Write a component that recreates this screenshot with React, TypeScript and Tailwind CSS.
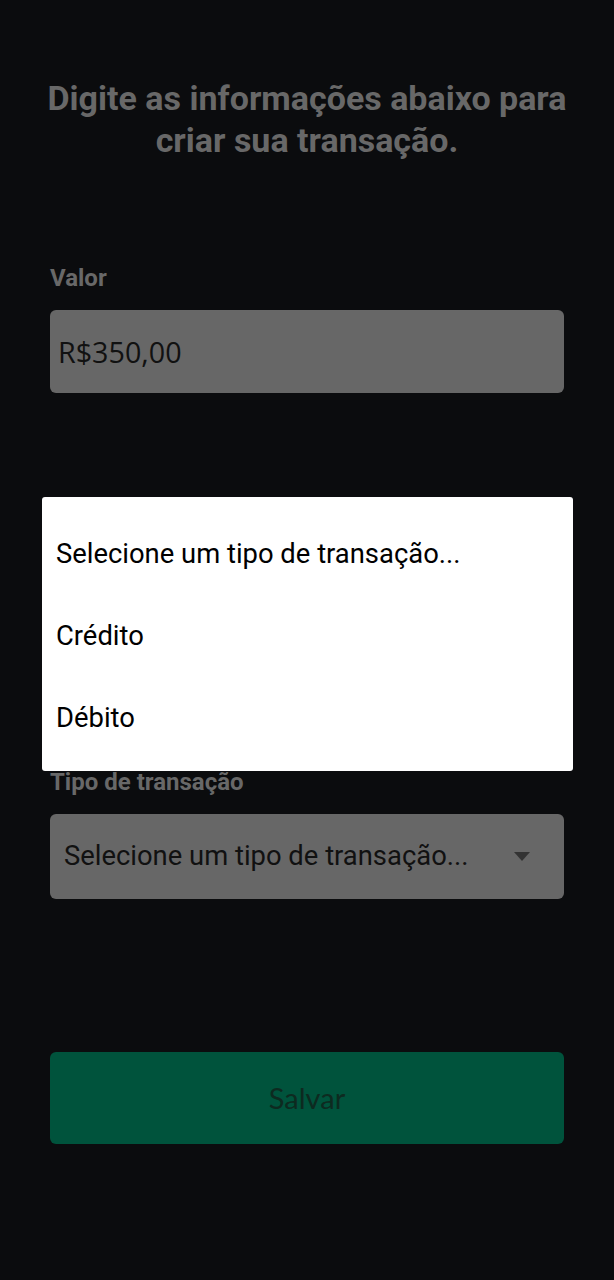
import React from "react";

export default function App() {
  return (
    <div className="relative min-h-[1280px] w-full bg-[#0b0c0e] px-[50px]" style={{ fontFamily: "Roboto, 'Noto Sans', sans-serif" }}>
      <h1 className="-mx-[40px] whitespace-nowrap pt-[77px] text-center text-[34px] font-bold leading-[42px] text-[#686868]">
        Digite as informações abaixo para
        <br />
        criar sua transação.
      </h1>

      <div className="mt-[103px] text-[24px] font-bold leading-[28px] text-[#686868]">Valor</div>
      <div className="mt-[18px] flex h-[83px] items-center rounded-[6px] bg-[#676767] px-[8px] text-[28.7px] text-[#111]" style={{ fontFamily: "'Open Sans', sans-serif" }}>
        R$350,00
      </div>

      <div className="mt-[375px] text-[24px] font-bold leading-[28px] text-[#686868]">Tipo de transação</div>
      <div className="mt-[18px] flex h-[85px] items-center justify-between rounded-[6px] bg-[#676767] pl-[14px] pr-[34px] text-[27.4px] text-[#111]">
        <span>Selecione um tipo de transação...</span>
        <svg width="16" height="9" viewBox="0 0 16 9"><path d="M0 0 H16 L8 9 Z" fill="#333" /></svg>
      </div>

      <button className="mt-[153px] flex h-[92px] w-full items-center justify-center rounded-[6px] bg-[#00533c] text-[29px] text-[#0d2a20]" style={{ fontFamily: "Lato, sans-serif" }}>
        Salvar
      </button>

      <div className="absolute left-[42px] top-[497px] flex h-[274px] w-[531px] flex-col justify-center rounded-[3px] bg-white px-[14px] pt-[5px] text-[27.4px] text-black">
        <div className="flex h-[82px] items-center">Selecione um tipo de transação...</div>
        <div className="flex h-[82px] items-center">Crédito</div>
        <div className="flex h-[82px] items-center">Débito</div>
      </div>
    </div>
  );
}
